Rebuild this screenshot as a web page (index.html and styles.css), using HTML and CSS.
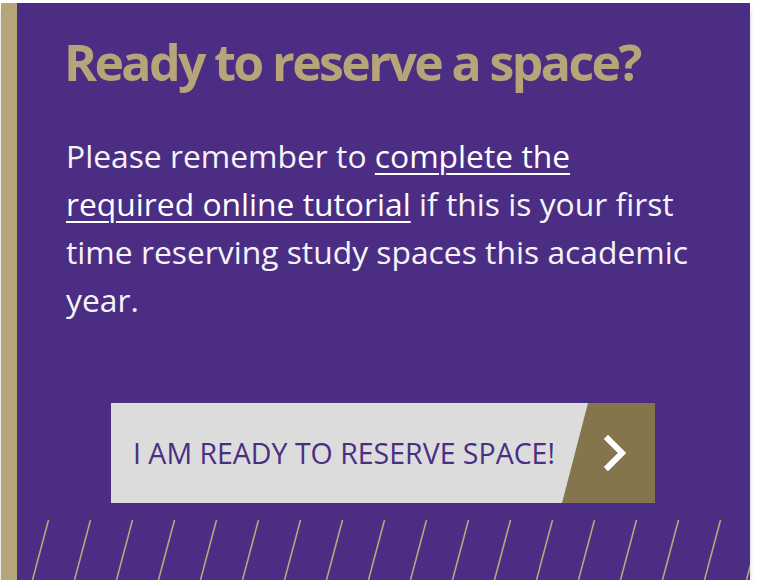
FILE: index.html
```html
<!DOCTYPE html>
<html>
<head>
<meta charset="utf-8">
<link rel="stylesheet" href="styles.css">
</head>
<body>
<section class="card">
  <h2 class="title">Ready to reserve a space?</h2>
  <p class="text">Please remember to <a href="#" class="link">complete the required online tutorial</a> if this is your first time reserving study spaces this academic year.</p>
  <div class="cta-row">
    <a href="#" class="cta">
      <span class="cta-label">I AM READY TO RESERVE SPACE!</span>
      <span class="cta-arrow">
        <svg width="26" height="40" viewBox="0 0 26 40"><path d="M5 6 L19 20 L5 34" fill="none" stroke="#fff" stroke-width="6" stroke-linecap="square"/></svg>
      </span>
    </a>
  </div>
  <svg class="stripes" width="100%" height="60">
    <defs>
      <pattern id="st" x="15" y="0" width="42" height="60" patternUnits="userSpaceOnUse">
        <line x1="16.5" y1="0" x2="0.5" y2="60" stroke="#b7a57a" stroke-width="1.6"/>
      </pattern>
    </defs>
    <rect width="100%" height="60" fill="url(#st)"/>
  </svg>
</section>
</body>
</html>
```
FILE: styles.css
```css
html, body {
  margin: 0;
  padding: 0;
  background: #fff;
}
body {
  padding: 3px 0 0 1px;
}
.card {
  width: 733px;
  height: 577px;
  background: #4b2e83;
  border-left: 16px solid #b7a57a;
  box-shadow: 0 6px 5px -1px rgba(0, 0, 0, 0.3);
  display: flex;
  flex-direction: column;
  overflow: hidden;
}
.title {
  margin: 29px 0 0 47px;
  font-family: "Open Sans", sans-serif;
  font-weight: 700;
  font-size: 50px;
  line-height: 60px;
  letter-spacing: -2.6px;
  color: #b7a57a;
}
.text {
  margin: 40px 0 0 49px;
  max-width: 630px;
  font-family: "Open Sans", sans-serif;
  font-size: 31.8px;
  line-height: 48px;
  color: #f5f3f8;
}
.link {
  color: #fff;
  text-decoration: underline;
  text-underline-offset: 5px;
  text-decoration-thickness: 2px;
}
.cta-row {
  margin-top: auto;
  padding-left: 94px;
  margin-bottom: 17px;
}
.cta {
  display: flex;
  width: 544px;
  height: 100px;
  background: #dcdcdc;
  text-decoration: none;
}
.cta-label {
  flex: 1;
  display: flex;
  align-items: center;
  padding-left: 22px;
  font-family: "Open Sans", sans-serif;
  font-size: 28.5px;
  color: #4b2e83;
}
.cta-arrow {
  width: 93px;
  background: #85754d;
  clip-path: polygon(26px 0, 100% 0, 100% 100%, 0 100%);
  display: flex;
  align-items: center;
  justify-content: flex-end;
  padding-right: 26px;
  box-sizing: border-box;
}
.stripes {
  display: block;
  flex: none;
}
```
